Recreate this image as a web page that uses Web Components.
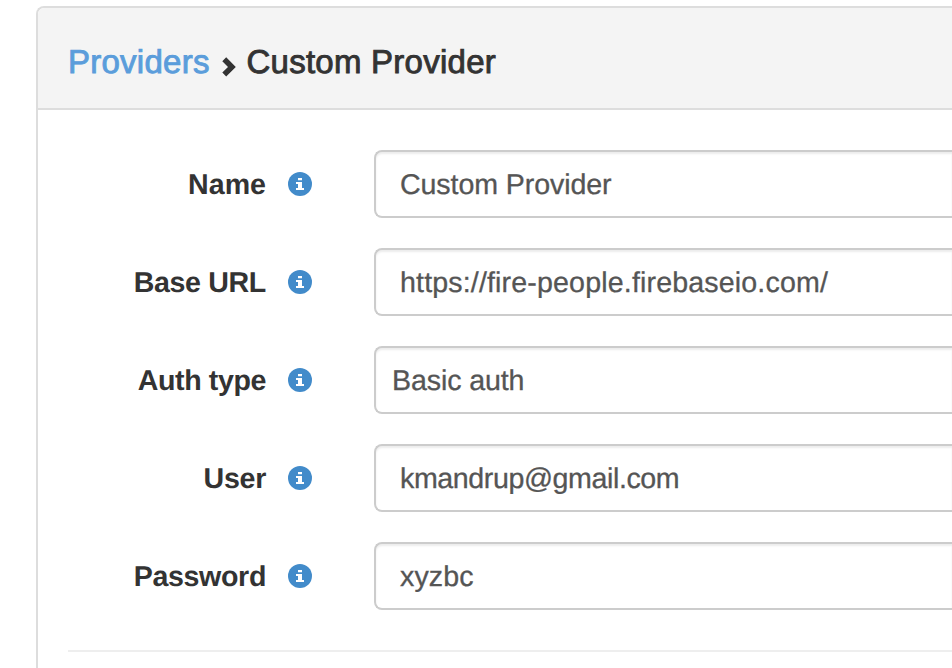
<!DOCTYPE html>
<html lang="en">
<head>
<meta charset="utf-8">
<title>Custom Provider</title>
<style>
html, body { margin: 0; height: 100%; overflow: hidden; background: #fff; }
body { font-family: "Liberation Sans", Arial, sans-serif; font-size: 28.6px; color: #333; text-rendering: geometricPrecision; }
</style>
</head>
<body>
<provider-panel>
  <bread-crumb slot="heading"><span slot="parent">Providers</span><span slot="current">Custom Provider</span></bread-crumb>
  <form-row style="--label-ls:0px;--value-ls:-.1px"><span slot="label">Name</span>Custom Provider</form-row>
  <form-row style="--label-ls:-.35px;--value-ls:.15px"><span slot="label">Base URL</span>https://fire-people.firebaseio.com/</form-row>
  <form-row kind="select" style="--label-ls:-.4px;--value-ls:-.12px"><span slot="label">Auth type</span>Basic auth</form-row>
  <form-row style="--label-ls:-.3px;--value-ls:-.4px"><span slot="label">User</span>kmandrup@gmail.com</form-row>
  <form-row style="--label-ls:-.35px;--value-ls:.1px"><span slot="label">Password</span>xyzbc</form-row>
</provider-panel>
<script>
function define(name, markup) {
  customElements.define(name, class extends HTMLElement {
    constructor() {
      super();
      this.attachShadow({ mode: "open" }).innerHTML = markup;
    }
  });
}

define("provider-panel", `
<style>
  :host { display: block; box-sizing: border-box; height: 668px; padding: 6px 0 0 36px; overflow: hidden; }
  .panel { box-sizing: border-box; height: 680px; border: 2px solid #ddd; border-right: 0; border-radius: 8px 0 0 0; background: #fff; overflow: hidden; }
  header { box-sizing: border-box; height: 102px; padding-left: 30px; background: #f4f4f4; border-bottom: 2px solid #ddd; display: flex; align-items: center; }
  main { display: flex; flex-direction: column; gap: 30px; padding: 40px 0 0 30px; }
  hr { width: 100%; height: 2px; margin: 10px 0 0; border: 0; background: #eee; }
</style>
<div class="panel">
  <header><slot name="heading"></slot></header>
  <main><slot></slot><hr></main>
</div>`);

define("bread-crumb", `
<style>
  :host { display: flex; align-items: center; height: 40px; padding-top: 8px; font-size: 33px; line-height: 40px; white-space: nowrap; letter-spacing: .25px; }
  .link { color: #5b9ddb; width: 154px; -webkit-text-stroke: .9px #5b9ddb; }
  .here { -webkit-text-stroke: .9px #333; }
  svg { display: block; width: 14px; height: 20px; margin: 9px 10.5px 0 0; }
</style>
<span class="link"><slot name="parent"></slot></span>
<svg viewBox="0 0 14 20"><path d="M0.3 4.2 4.2 0.3 13.8 9.9 4.2 19.5 0.3 15.6 6 9.9Z" fill="#333"/></svg>
<span class="here"><slot name="current"></slot></span>`);

define("info-icon", `
<style>:host { display: block; width: 24px; height: 24px; } svg { display: block; }</style>
<svg width="24" height="24" viewBox="0 0 24 24"><circle cx="12" cy="12" r="12" fill="#428bca"/><path d="M10 6h4v2.3h-4zM8 10h6v6h2v2H8v-2h2v-4H8z" fill="#fff"/></svg>`);

define("form-row", `
<style>
  :host { display: grid; grid-template-columns: 198px 24px minmax(0, 1fr); align-items: center; height: 68px; white-space: nowrap; }
  .label { padding-top: 3px; font-weight: 700; text-align: right; letter-spacing: var(--label-ls); }
  info-icon { margin-left: 22px; }
  .field { box-sizing: border-box; height: 68px; margin-left: 84px; padding-left: 24px; line-height: 67px; border: 2px solid #ccc; border-right: 0; border-radius: 8px 0 0 8px; color: #555; background: #fff; box-shadow: inset 0 2px 2px rgba(0,0,0,.075); letter-spacing: var(--value-ls); -webkit-text-stroke: .3px #555; }
  :host([kind="select"]) .field { padding-left: 16px; }
</style>
<div class="label"><slot name="label"></slot></div>
<info-icon></info-icon>
<div class="field"><slot></slot></div>`);
</script>
</body>
</html>
